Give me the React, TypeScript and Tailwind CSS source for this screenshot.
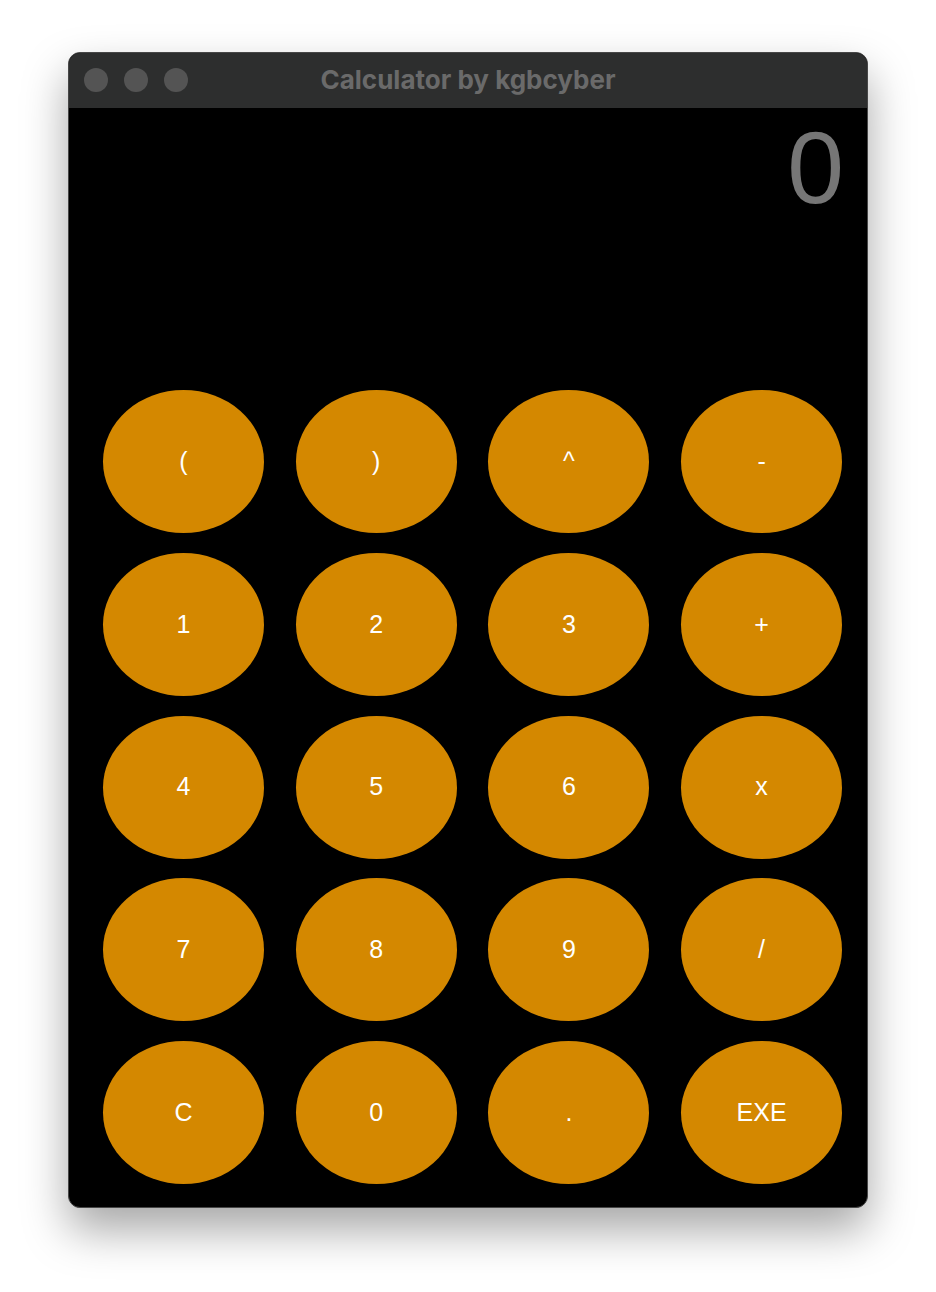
import React from "react";

const keys = ["(", ")", "^", "-", "1", "2", "3", "+", "4", "5", "6", "x", "7", "8", "9", "/", "C", "0", ".", "EXE"];

export default function App() {
  return (
    <div className="w-[936px] h-[1292px] bg-white pt-[52px] pl-[68px]">
      <div className="w-[800px] h-[1156px] rounded-[12px] border border-[#474747] bg-black overflow-hidden flex flex-col shadow-[0_22px_45px_rgba(0,0,0,0.35)]">
        <div className="relative h-[55px] bg-[#2d2e2e] flex items-center shrink-0">
          <div className="flex gap-[16px] pl-[15px] pb-[1px]">
            <div className="w-[24px] h-[24px] rounded-full bg-[#545454]" />
            <div className="w-[24px] h-[24px] rounded-full bg-[#545454]" />
            <div className="w-[24px] h-[24px] rounded-full bg-[#545454]" />
          </div>
          <div className="absolute inset-0 flex items-center justify-center pb-[3px] font-['Inter',sans-serif] font-bold text-[26px] text-[#6a6a6a]">
            Calculator by kgbcyber
          </div>
        </div>
        <div className="h-[282px] flex justify-end pr-[23px] pt-[9px]">
          <div className="font-['Liberation_Sans',sans-serif] text-[102px] leading-none text-[#767676]">0</div>
        </div>
        <div className="grid grid-cols-[repeat(4,161px)] auto-rows-[143px] gap-x-[31.7px] gap-y-[19.75px] pl-[34px]">
          {keys.map((k) => (
            <div
              key={k}
              className="rounded-[50%] bg-[#d48800] flex items-center justify-center text-white text-[25px] font-['Liberation_Sans',sans-serif]"
            >
              {k}
            </div>
          ))}
        </div>
      </div>
    </div>
  );
}
